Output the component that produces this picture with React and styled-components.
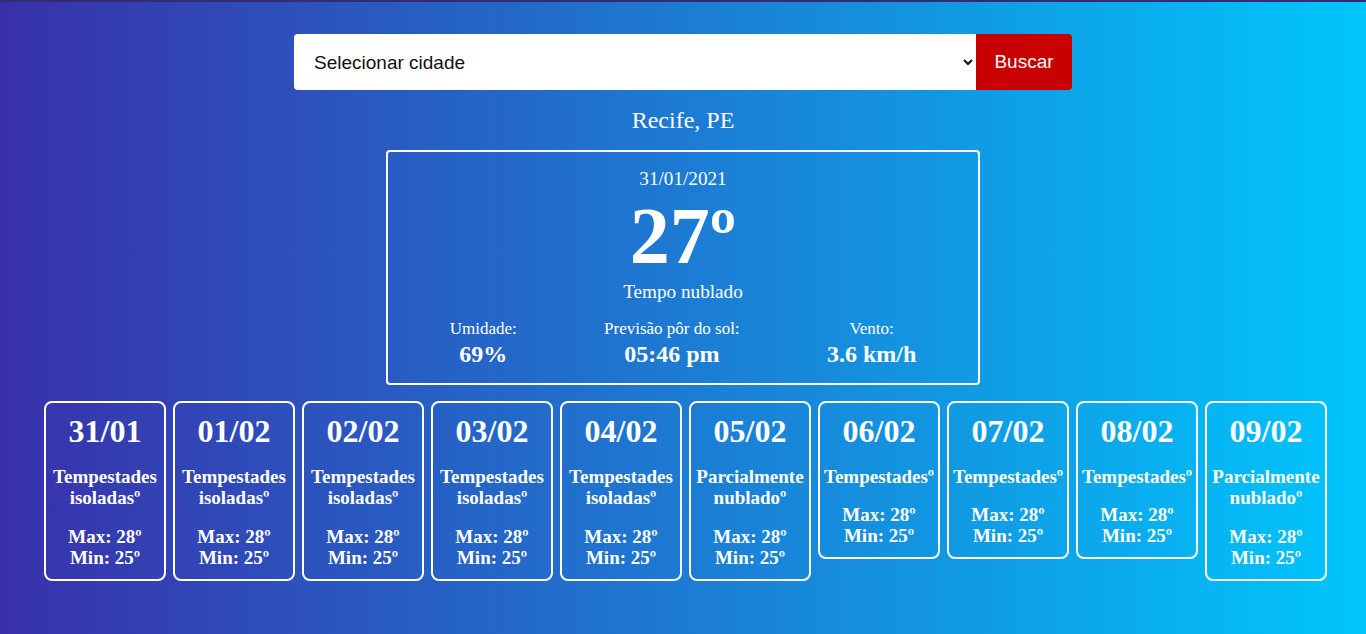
import React from "react";
import styled, { createGlobalStyle } from "styled-components";

const GlobalStyle = createGlobalStyle`
  * { box-sizing: border-box; }
  html, body { margin: 0; padding: 0; }
  body {
    min-height: 100vh;
    background: linear-gradient(to right, #3930ab 0%, #00c6fc 100%);
    border-top: 2px solid #332c72;
    font-family: "Liberation Serif", "Times New Roman", serif;
    color: #fff;
  }
`;

const Page = styled.main`
  min-height: calc(100vh - 2px);
  display: flex;
  flex-direction: column;
  align-items: center;
  padding-top: 32px;
`;

const SearchForm = styled.form`
  display: flex;
  width: 778px;
  height: 56px;
`;

const CitySelect = styled.select`
  flex: 1;
  height: 56px;
  border: none;
  border-radius: 4px 0 0 4px;
  background: #fff;
  color: #111;
  padding: 0 6px 0 16px;
  font-family: "Liberation Sans", Arial, sans-serif;
  font-size: 19px;
  outline: none;
`;

const SearchButton = styled.button`
  width: 96px;
  height: 56px;
  border: none;
  border-radius: 0 4px 4px 0;
  background: #c80000;
  color: #fff;
  font-family: "Liberation Sans", Arial, sans-serif;
  font-size: 19px;
  cursor: pointer;
`;

const CityName = styled.h2`
  margin: 17px 0 16px;
  font-size: 24px;
  font-weight: normal;
  line-height: 27px;
`;

const TodayCard = styled.section`
  width: 594px;
  border: 2px solid #fff;
  border-radius: 4px;
  padding: 16px 18px 15px;
  display: flex;
  flex-direction: column;
  align-items: center;
  text-align: center;
`;

const TodayDate = styled.div`
  font-size: 19.2px;
  line-height: 22px;
`;

const Temperature = styled.div`
  margin-top: 6px;
  font-size: 80px;
  font-weight: bold;
  line-height: 80px;
`;

const Condition = styled.div`
  margin-top: 5px;
  font-size: 19.2px;
  line-height: 22px;
`;

const StatsRow = styled.div`
  align-self: stretch;
  display: flex;
  justify-content: space-around;
  margin-top: 16px;
`;

const Stat = styled.div`
  display: flex;
  flex-direction: column;
  align-items: center;
`;

const StatLabel = styled.span`
  font-size: 17px;
  line-height: 20px;
`;

const StatValue = styled.span`
  margin-top: 1px;
  font-size: 24px;
  font-weight: bold;
  line-height: 28px;
`;

const ForecastRow = styled.div`
  display: flex;
  align-items: flex-start;
  gap: 7px;
  padding-left: 5px;
  margin-top: 16px;
`;

const DayCard = styled.article`
  width: 122px;
  border: 2px solid #fff;
  border-radius: 8px;
  padding: 10px 4px 11px;
  display: flex;
  flex-direction: column;
  align-items: center;
  text-align: center;
  font-weight: bold;
`;

const DayDate = styled.div`
  font-size: 32px;
  line-height: 37px;
`;

const DayDesc = styled.div`
  margin-top: 16px;
  font-size: 19px;
  line-height: 21px;
`;

const DayTemps = styled.div`
  margin-top: ${(p) => (p.$tight ? "17px" : "18px")};
  font-size: 19px;
  line-height: 21px;
`;

const forecast = [
  { date: "31/01", desc: ["Tempestades", "isoladasº"] },
  { date: "01/02", desc: ["Tempestades", "isoladasº"] },
  { date: "02/02", desc: ["Tempestades", "isoladasº"] },
  { date: "03/02", desc: ["Tempestades", "isoladasº"] },
  { date: "04/02", desc: ["Tempestades", "isoladasº"] },
  { date: "05/02", desc: ["Parcialmente", "nubladoº"] },
  { date: "06/02", desc: ["Tempestadesº"] },
  { date: "07/02", desc: ["Tempestadesº"] },
  { date: "08/02", desc: ["Tempestadesº"] },
  { date: "09/02", desc: ["Parcialmente", "nubladoº"] },
];

export default function App() {
  return (
    <>
      <GlobalStyle />
      <Page>
        <SearchForm onSubmit={(e) => e.preventDefault()}>
          <CitySelect defaultValue="">
            <option value="">Selecionar cidade</option>
            <option value="recife">Recife, PE</option>
          </CitySelect>
          <SearchButton type="submit">Buscar</SearchButton>
        </SearchForm>
        <CityName>Recife, PE</CityName>
        <TodayCard>
          <TodayDate>31/01/2021</TodayDate>
          <Temperature>27º</Temperature>
          <Condition>Tempo nublado</Condition>
          <StatsRow>
            <Stat>
              <StatLabel>Umidade:</StatLabel>
              <StatValue>69%</StatValue>
            </Stat>
            <Stat>
              <StatLabel>Previsão pôr do sol:</StatLabel>
              <StatValue>05:46 pm</StatValue>
            </Stat>
            <Stat>
              <StatLabel>Vento:</StatLabel>
              <StatValue>3.6 km/h</StatValue>
            </Stat>
          </StatsRow>
        </TodayCard>
        <ForecastRow>
          {forecast.map((d) => (
            <DayCard key={d.date}>
              <DayDate>{d.date}</DayDate>
              <DayDesc>
                {d.desc.map((line) => (
                  <div key={line}>{line}</div>
                ))}
              </DayDesc>
              <DayTemps $tight={d.desc.length === 1}>
                <div>Max: 28º</div>
                <div>Min: 25º</div>
              </DayTemps>
            </DayCard>
          ))}
        </ForecastRow>
      </Page>
    </>
  );
}
